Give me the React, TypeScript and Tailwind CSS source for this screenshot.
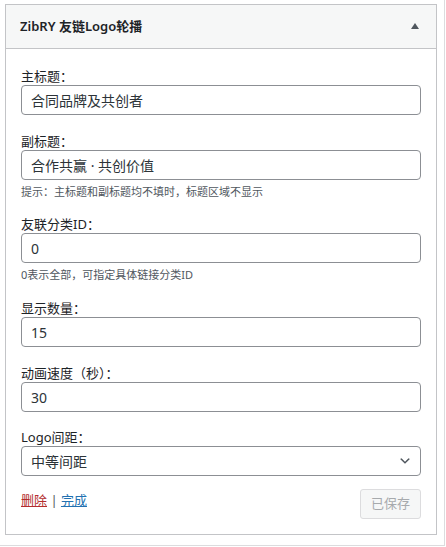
const font = '"Noto Sans", "Noto Sans CJK SC", sans-serif';

function Field({
  label,
  value,
  gap,
  hint,
}: {
  label: string;
  value: string;
  gap: string;
  hint?: string;
}) {
  return (
    <div className={gap}>
      <label className="block text-[13px] leading-[18px] text-[#1d2327]">{label}</label>
      <input
        readOnly
        value={value}
        className="block h-[30px] w-full rounded-[4px] border border-[#8c8f94] bg-white px-[9px] text-[14px] text-[#2c3338] outline-none"
      />
      {hint && <p className="mt-[4px] text-[11px] leading-[16px] text-[#50575e]">{hint}</p>}
    </div>
  );
}

export default function App() {
  return (
    <div className="h-[546px] w-[445px] border-r border-b border-[#dcdcde] bg-white pl-[5px] pt-[4px]" style={{ fontFamily: font }}>
      <div className="w-[432px] border border-[#c3c4c7] bg-white">
        <div className="flex h-[44px] items-center justify-between border-b border-[#c3c4c7] bg-[#f6f7f7] pl-[14px] pr-[17px]">
          <h3 className="text-[13px] font-semibold text-[#1d2327]">ZibRY 友链Logo轮播</h3>
          <svg width="8" height="6" viewBox="0 0 8 6" className="mt-[-1px]">
            <polygon points="4,0 8,6 0,6" fill="#50575e" />
          </svg>
        </div>

        <div className="px-[15px] pb-[15px] pt-[18px]">
          <Field label="主标题：" value="合同品牌及共创者" gap="" />
          <Field
            label="副标题："
            value="合作共赢 · 共创价值"
            gap="mt-[17px]"
            hint="提示：主标题和副标题均不填时，标题区域不显示"
          />
          <Field label="友联分类ID：" value="0" gap="mt-[15px]" hint="0表示全部，可指定具体链接分类ID" />
          <Field label="显示数量：" value="15" gap="mt-[16px]" />
          <Field label="动画速度（秒）：" value="30" gap="mt-[17px]" />

          <div className="mt-[16px]">
            <label className="block text-[13px] leading-[18px] text-[#1d2327]">Logo间距：</label>
            <div className="relative">
              <select
                defaultValue="medium"
                className="block h-[30px] w-full appearance-none rounded-[4px] border border-[#8c8f94] bg-white px-[9px] text-[14px] text-[#2c3338] outline-none"
              >
                <option value="small">较小间距</option>
                <option value="medium">中等间距</option>
                <option value="large">较大间距</option>
              </select>
              <svg
                width="14"
                height="14"
                viewBox="0 0 20 20"
                className="pointer-events-none absolute right-[9px] top-[8px]"
              >
                <path d="M5 6l5 5 5-5 2 1-7 7-7-7 2-1z" fill="#50575e" />
              </svg>
            </div>
          </div>

          <div className="mt-[13px] flex items-start justify-between">
            <div className="mt-[1px] text-[13px] leading-[20px] text-[#50575e]">
              <a href="#" className="text-[#b32d2e] underline">删除</a>
              <span> | </span>
              <a href="#" className="text-[#2271b1] underline">完成</a>
            </div>
            <button
              disabled
              className="h-[30px] rounded-[3px] border border-[#dcdcde] bg-[#f6f7f7] px-[10px] text-[13px] text-[#a7aaad]"
            >
              已保存
            </button>
          </div>
        </div>
      </div>
    </div>
  );
}
